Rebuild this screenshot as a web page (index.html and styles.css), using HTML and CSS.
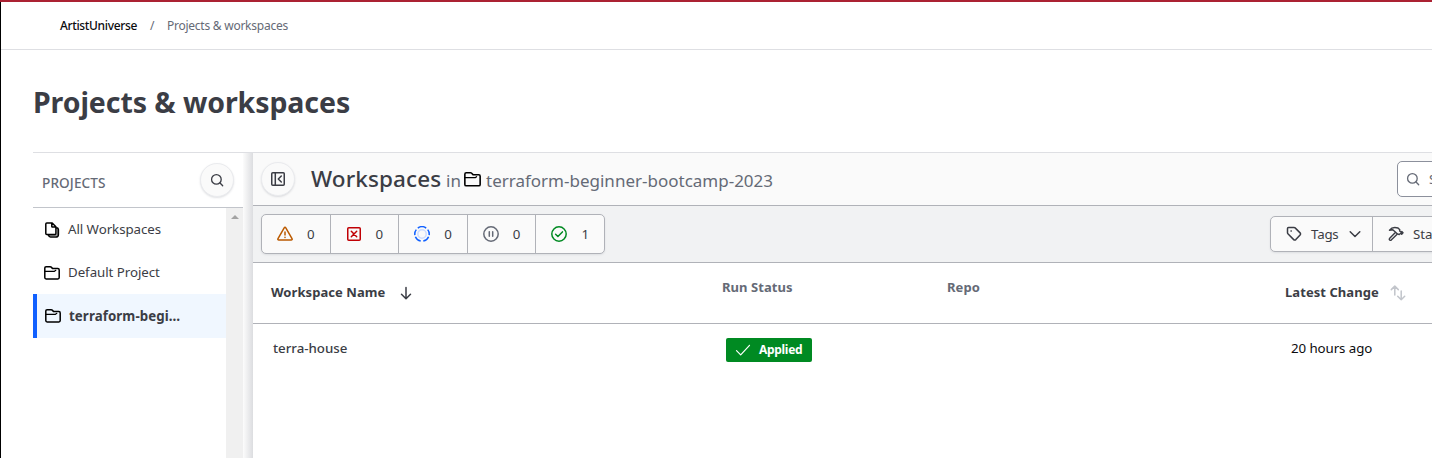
FILE: index.html
```html
<!DOCTYPE html>
<html lang="en">
<head>
<meta charset="utf-8">
<title>Projects &amp; workspaces</title>
<link rel="stylesheet" href="styles.css">
</head>
<body>
<svg class="defs" width="0" height="0">
  <symbol id="folder" viewBox="0 0 16 16"><path d="M.8 12.6V3c0-.8.5-1.3 1.3-1.3h4.100c.4 0 .7.1 1 .4l1.500 1.500h5.200c.8 0 1.300.5 1.300 1.300v7.700c0 .8-.5 1.300-1.300 1.300H2.100c-.8 0-1.300-.5-1.300-1.300z"/><path d="M1 6.300h9.500l1.300-1" stroke-width="1.200"/></symbol>
  <symbol id="search" viewBox="0 0 16 16"><circle cx="7.300" cy="7.300" r="5.500"/><path d="M11.500 11.500l3 3"/></symbol>
</svg>
<div class="page">
  <nav class="crumbs"><span class="crumb-org">ArtistUniverse</span><span class="crumb-sep">/</span><span class="crumb-page">Projects &amp; workspaces</span></nav>
  <h1 class="title">Projects &amp; workspaces</h1>
  <div class="panel">
    <aside class="sidebar">
      <div class="side-head">
        <span class="side-label">PROJECTS</span>
        <button class="round"><svg class="icon i14" viewBox="0 0 16 16"><use href="#search"/></svg></button>
      </div>
      <div class="side-body">
        <ul class="projects">
          <li class="project"><svg class="icon black" viewBox="0 0 16 16"><path d="M4 13.300h8c.8 0 1.400-.6 1.400-1.400V6" stroke="#888"/><path d="M2.800 1h5.400l3.700 3.700v6.900c0 .6-.4 1-1 1H2.800c-.6 0-1-.4-1-1V2c0-.6.4-1 1-1zM7.800 1.200v3.200c0 .4.200.600.600.600h3.300M4.500 13c.2 1.200.9 2 2 2h5.200c1.600 0 2.700-1 2.700-2.600V7.500c0-.9-.7-1.600-1.900-1.800"/></svg><span class="pname">All Workspaces</span></li>
          <li class="project"><svg class="icon black" viewBox="0 0 16 16"><use href="#folder"/></svg><span class="pname">Default Project</span></li>
          <li class="project active"><svg class="icon black" viewBox="0 0 16 16"><use href="#folder"/></svg><span class="pname">terraform-begi…</span></li>
        </ul>
        <div class="scrollbar"><i class="scroll-up"></i></div>
      </div>
      <div class="edge"></div>
    </aside>
    <main class="main">
      <header class="main-head">
        <button class="round"><svg class="icon i16" viewBox="0 0 16 16"><rect x="1.750" y="1.750" width="12.500" height="12.500" rx="1"/><path d="M5.300 2v12M11.300 5L8.300 8l3 3"/></svg></button>
        <h2 class="ws">Workspaces</h2><span class="in">in</span>
        <svg class="icon black head-folder" viewBox="0 0 16 16"><use href="#folder"/></svg>
        <span class="current">terraform-beginner-bootcamp-2023</span>
        <div class="search"><svg class="icon i14" viewBox="0 0 16 16"><use href="#search"/></svg><span>Search by name</span></div>
      </header>
      <div class="filters">
        <div class="group counts">
          <div class="cell"><svg class="icon orange" viewBox="0 0 16 16"><path d="M7.200 1.800L1 12.700c-.4.700 0 1.300.8 1.300h12.400c.8 0 1.200-.600.8-1.300L8.800 1.800c-.4-.6-1.200-.6-1.600 0zM8 6v3M8 11.200v.3"/></svg><b>0</b></div>
          <div class="cell"><svg class="icon red" viewBox="0 0 16 16"><rect x="1.750" y="1.750" width="12.500" height="12.500" rx="1"/><path d="M5.300 5.300l5.400 5.400M10.700 5.300l-5.400 5.400"/></svg><b>0</b></div>
          <div class="cell"><svg class="icon blue" viewBox="0 0 16 16"><circle cx="8" cy="8" r="4.200" stroke="#cddcff"/><path stroke-linecap="butt" d="M3.800 2.100a7.200 7.200 0 0 1 8.400 0M13.700 3.600a7.200 7.200 0 0 1 1.400 5.600M14.600 10.800a7.200 7.200 0 0 1-5.300 4.300M6.700 15.100a7.200 7.200 0 0 1-5.300-4.300M.9 9.200a7.200 7.200 0 0 1 1.400-5.600"/></svg><b>0</b></div>
          <div class="cell"><svg class="icon grey" viewBox="0 0 16 16"><circle cx="8" cy="8" r="7.200"/><path d="M6.300 5.700v4.600M9.700 5.700v4.600"/></svg><b>0</b></div>
          <div class="cell"><svg class="icon green" viewBox="0 0 16 16"><circle cx="8" cy="8" r="7.200"/><path d="M4.600 8.300l2.300 2.200 4.500-4.600"/></svg><b>1</b></div>
        </div>
        <div class="group menus">
          <div class="menu tags"><svg class="icon" viewBox="0 0 16 16"><path d="M1.500 2.500c0-.6.4-1 1-1h5.600c.4 0 .7.1 1 .4l5 5c.6.6.6 1.500 0 2.100l-4.300 4.600c-.6.6-1.500.6-2.100 0l-5.800-5.800c-.3-.3-.4-.6-.4-1zM5 4.900h.3"/></svg><span>Tags</span><svg class="icon chev" viewBox="0 0 16 16"><path d="M3.200 5.700L8 10.500l4.800-4.800"/></svg></div>
          <div class="menu status"><svg class="icon" viewBox="0 0 16 16"><path stroke-width="1.400" d="M7.600 6.200L1.500 12.600c-.7 1 .7 2.300 1.700 1.500l6.200-6.200M1.500 4.200C3.500 1.500 6.800 1 10 2l1.800 1.800-.2 1.200 2 1.500M1.500 4.200l3.300-.5 2.800 2.500 1.800 1.700 1.800.6 1.500-1.300 1 1 1.300-1.500-1.200-1.200"/></svg><span>Status</span></div>
        </div>
      </div>
      <div class="row thead">
        <div class="c-name"><span class="t-name">Workspace Name</span><svg class="icon arrow" viewBox="0 0 16 16"><path d="M8 2.500v11M3.500 9.200L8 13.700l4.500-4.500"/></svg></div>
        <div class="c-status"><span class="t-run">Run Status</span></div>
        <div class="c-repo"><span class="t-repo">Repo</span></div>
        <div class="c-change"><span class="t-change">Latest Change</span><svg class="icon swap" viewBox="0 0 16 16"><path d="M4.800 10V1.200M1.300 4.600l3.500-3.500 3.500 3.500M11.200 6v8.800M7.700 11.300l3.500 3.500 3.500-3.500"/></svg></div>
      </div>
      <div class="row data">
        <div class="c-name"><span class="d-name">terra-house</span></div>
        <div class="c-status"><span class="badge"><svg class="icon" viewBox="0 0 16 16"><path d="M1.500 8.700l4.200 4.200 8.800-9.600"/></svg><span>Applied</span></span></div>
        <div class="c-repo"></div>
        <div class="c-change"><span class="d-change">20 hours ago</span></div>
      </div>
    </main>
  </div>
</div>
</body>
</html>
```

FILE: styles.css
```css
* { box-sizing: border-box; }
body { margin: 0; background: #fff; color: #3b3d45; font: 13.300px/20px "Noto Sans", "Open Sans", sans-serif; overflow: hidden; }
.defs { display: block; height: 0; }
.page { height: 458px; border-top: 2px solid #ab2233; overflow: hidden; display: flex; flex-direction: column; box-shadow: inset 1px 0 #000; }
.icon { width: 16px; height: 16px; flex: none; fill: none; stroke: currentColor; stroke-width: 1.5; stroke-linecap: round; stroke-linejoin: round; }
.i14 { width: 14px; height: 14px; }
.black { color: #000; }
.crumbs { margin-left: 1px; height: 48px; flex: none; display: flex; align-items: center; padding-left: 59px; border-bottom: 1px solid #dedfe3; font-size: 12px; }
.crumb-org { width: 77px; color: #0c0c0e; font-weight: 500; letter-spacing: -.35px; white-space: nowrap; }
.crumb-sep { margin-left: 13px; width: 17px; color: #656a76; }
.crumb-page { color: #656a76; letter-spacing: -.25px; }
.title { margin: 33px 0 0 33px; height: 69px; flex: none; font-size: 28.500px; line-height: 38px; font-weight: 700; letter-spacing: -.08px; }
.panel { margin-left: 33px; flex: 1; display: flex; border-top: 1px solid #dedfe3; min-height: 0; }
.sidebar { width: 220px; flex: none; display: grid; grid-template-columns: 210px 10px; grid-template-rows: 55px 1fr; }
.side-head { display: flex; align-items: center; justify-content: space-between; padding: 0 9px; border-bottom: 1px solid #c2c5cb; }
.side-label { color: #656a76; font-weight: 500; padding-top: 5px; font-size: 13.600px; letter-spacing: .1px; }
.round { width: 34px; height: 34px; flex: none; border: 1px solid #eaebee; border-radius: 50%; background: #fafafa; display: grid; place-items: center; padding: 0; color: #3b3d45; box-shadow: 0 1px 2px #656a7633; }
.side-body { display: flex; grid-row: 2; }
.edge { grid-column: 2; grid-row: 1 / 3; background: linear-gradient(90deg, #fcfcfc, #dcdde0); }
.projects { width: 193px; margin: 0; padding: 0; list-style: none; }
.project { height: 43px; display: flex; align-items: center; gap: 8px; padding-left: 11px; letter-spacing: -.05px; }
.pname { margin-top: -1px; }
.project.active { height: 44px; padding-left: 8px; border-left: 4px solid #1060ff; background: #f0f7ff; font-weight: 700; letter-spacing: .08px; }
.scrollbar { width: 17px; background: #f0f0f0; display: flex; justify-content: center; padding-top: 7px; }
.scroll-up { width: 0; height: 0; border: 4px solid transparent; border-top: 0; border-bottom-color: #a3a3a3; }
.main { flex: 1; min-width: 0; overflow: hidden; }
.main-head { height: 53px; background: #fafafa; border-bottom: 1px solid #b0b2b8; display: flex; align-items: center; padding-left: 8px; white-space: nowrap; }
.ws { flex: none; margin: 0 5px 0 16px; width: 130px; font-size: 22.500px; font-weight: 500; letter-spacing: .1px; line-height: 30px; }
.in, .current { flex: none; color: #656a76; font-size: 17px; line-height: 30px; padding-top: 3px; }
.in { width: 18px; }
.head-folder { width: 17px; height: 17px; margin-right: 5px; }
.current { letter-spacing: 0; width: 289px; }
.search { margin-left: 622px; flex: none; width: 200px; height: 36px; border: 1px solid #8c909c; border-radius: 5px; background: #fff; display: flex; align-items: center; gap: 9px; padding-left: 8px; color: #656a76; }
.filters { height: 57px; background: #f1f2f3; border-bottom: 1px solid #b0b2b8; display: flex; align-items: center; padding-left: 8px; }
.group { display: flex; flex: none; background: #fafafa; border: 1px solid #b0b2b8; border-radius: 5px; box-shadow: 0 1px 2px #656a7622; }
.counts { width: 344px; height: 40px; }
.cell { flex: 1; display: flex; align-items: center; padding-left: 15px; gap: 14px; }
.cell + .cell, .menu + .menu { border-left: 1px solid #b0b2b8; }
.cell b { font-weight: 400; }
.orange { color: #bb5a00; }
.red { color: #c00005; }
.blue { color: #1060ff; }
.grey { color: #656a76; }
.green { color: #008a22; }
.menus { margin-left: 665px; height: 36px; width: 240px; }
.menu { display: flex; align-items: center; padding-left: 15px; gap: 9px; }
.tags { width: 101px; }
.tags span { width: 27px; letter-spacing: -.2px; }
.row { display: grid; grid-template-columns: 468px 225px 338px 1fr; white-space: nowrap; }
.thead { height: 61px; border-bottom: 1px solid #b0b2b8; font-weight: 700; letter-spacing: .06px; font-size: 13px; }
.thead > div { display: flex; align-items: center; }
.thead span { margin-top: -2px; }
.thead .c-name { padding-left: 18px; }
.thead .c-status, .thead .c-repo { color: #656a76; padding-bottom: 10px; }
.thead .c-status { padding-left: 1px; }
.thead .c-repo { padding-left: 1px; }
.t-name { width: 127px; }
.t-change { width: 105px; }
.thead .c-change { padding-left: 1px; }
.thead .swap { color: #c2c5cb; }
.data { padding-top: 14px; }
.data .c-name { padding: 0 0 0 20px; font-weight: 500; letter-spacing: -.02px; }
.data .c-status { padding-left: 5px; }
.data .c-change { padding-left: 7px; color: #0c0c0e; letter-spacing: -.08px; }
.badge { display: flex; align-items: center; width: 86px; height: 24px; padding-left: 9px; gap: 8px; background: #008a22; border-radius: 2px; color: #fff; font-size: 12px; font-weight: 700; letter-spacing: -.3px; }
.badge .icon { stroke-width: 1.2; }
```
